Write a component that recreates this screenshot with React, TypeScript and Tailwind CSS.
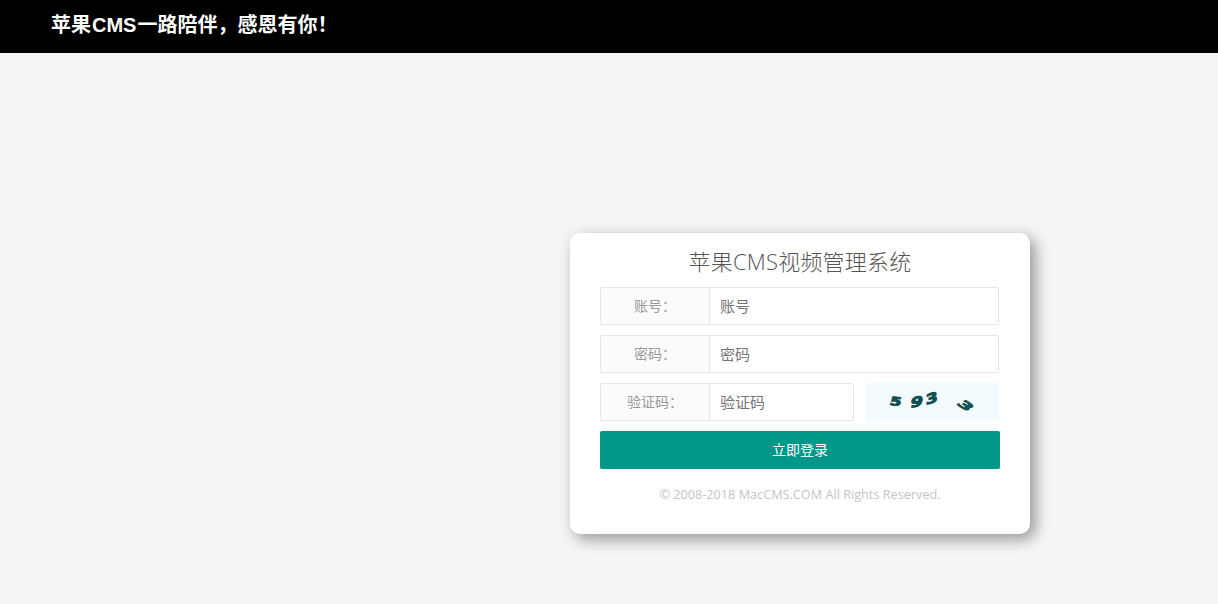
const F = "font-['Open_Sans','Noto_Sans_CJK_SC',sans-serif]";

function Row({ label, value, narrow }: { label: string; value: string; narrow?: boolean }) {
  return (
    <div className={`flex h-[38px] rounded-[2px] border border-[#e6e6e6] ${narrow ? 'w-[254px]' : 'w-[399px]'}`}>
      <div className="flex w-[109px] shrink-0 items-center justify-center border-r border-[#e6e6e6] bg-[#fbfbfb] pb-[2px] text-[14px] text-[#999999]">{label}</div>
      <div className="flex flex-1 items-center bg-white pl-[10px] text-[15px] text-[#757575]">{value}</div>
    </div>
  );
}

export default function App() {
  return (
    <div className={`min-h-[604px] bg-[#f5f5f5] ${F}`}>
      <header className="flex h-[53px] items-center bg-black pb-[3px] pl-[51px] text-[20px] font-bold text-white">
        苹果<span className="mx-[1px] font-['Liberation_Sans',sans-serif]">CMS</span>一路陪伴，感恩有你！
      </header>
      <main className="ml-[570px] mt-[180px] h-[301px] w-[460px] rounded-[10px] bg-white px-[30px] pt-[11px] shadow-[5px_5px_15px_rgba(0,0,0,0.4)]">
        <h1 className="mb-[1px] h-[42px] text-center text-[22px] font-light leading-[34px] tracking-[0.2px] text-[#555555]">苹果CMS视频管理系统</h1>
        <div className="flex flex-col gap-[10px]">
          <Row label="账号：" value="账号" />
          <Row label="密码：" value="密码" />
          <div className="flex h-[38px] items-center gap-[12px]">
            <Row label="验证码：" value="验证码" narrow />
            <svg className="h-[38px] w-[133px] bg-[#f3fbfe]" viewBox="0 0 133 38">
              <g fill="#0f4f4f" stroke="#0f4f4f" strokeWidth="1" fontFamily="'DejaVu Sans',sans-serif" fontWeight="700" fontSize="14">
                <text transform="translate(23 22) rotate(5) skewX(-8) scale(1.2 0.85)">5</text>
                <text transform="translate(44 25) rotate(-12) skewX(-20) scale(1.3 0.95)">9</text>
                <text transform="translate(60 22) rotate(-18) skewX(-15) scale(1.3 0.95)">3</text>
                <text transform="translate(90 21) rotate(35) skewX(-25) scale(1.4 0.85)">3</text>
              </g>
            </svg>
          </div>
          <button className="h-[38px] w-[400px] rounded-[2px] bg-[#009688] pb-[1px] text-[14px] text-white">立即登录</button>
        </div>
        <p className="mt-[17px] text-center text-[12.7px] leading-[16px] text-[#c4c4c4]">© 2008-2018 MacCMS.COM All Rights Reserved.</p>
      </main>
    </div>
  );
}
